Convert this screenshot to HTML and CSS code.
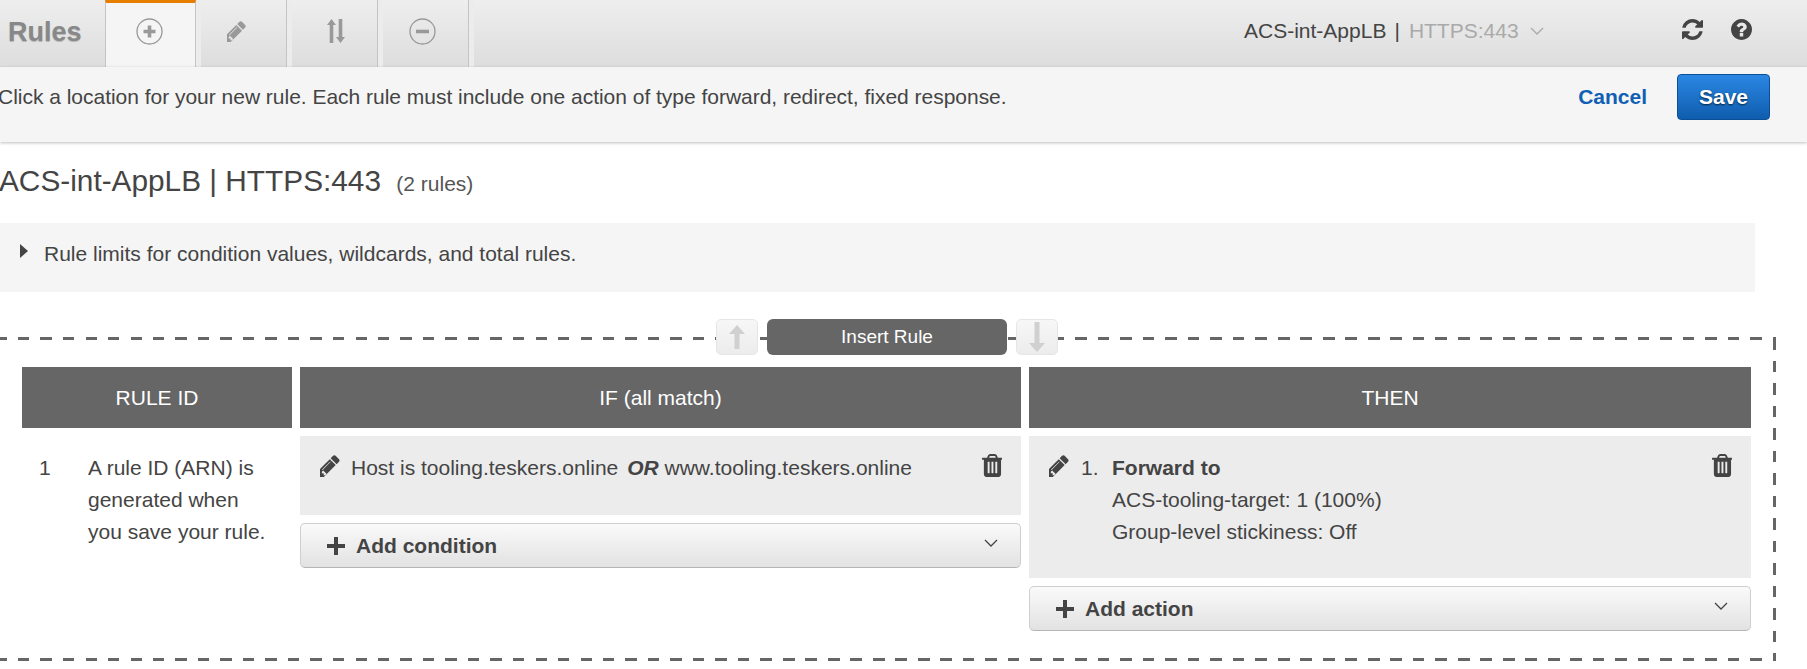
FILE: index.html
```html
<!DOCTYPE html>
<html lang="en">

<head>
    <meta charset="UTF-8">
    <title>Rules</title>
    <link rel="stylesheet" href="styles.css">
</head>

<body>
    <svg class="icon-defs" width="0" height="0">
        <symbol id="i-pencil" viewBox="128 128 1536 1536">
            <path d="M491 1536l91-91-235-235-91 91v107h128v128h107zm372-928q0-22-22-22-10 0-17 7l-542 542q-7 7-7 17 0 22 22 22 10 0 17-7l542-542q7-7 7-17zm-54-192l416 416-832 832h-416v-416zm683 96q0 53-37 90l-166 166-416-416 166-165q36-38 90-38 53 0 91 38l235 234q37 39 37 91z"/>
        </symbol>
        <symbol id="i-trash" viewBox="128 128 1408 1536">
            <path d="M704 1376v-704q0-14-9-23t-23-9h-64q-14 0-23 9t-9 23v704q0 14 9 23t23 9h64q14 0 23-9t9-23zm256 0v-704q0-14-9-23t-23-9h-64q-14 0-23 9t-9 23v704q0 14 9 23t23 9h64q14 0 23-9t9-23zm256 0v-704q0-14-9-23t-23-9h-64q-14 0-23 9t-9 23v704q0 14 9 23t23 9h64q14 0 23-9t9-23zm-544-992h448l-48-117q-7-9-17-11h-317q-10 2-17 11zm928 32v64q0 14-9 23t-23 9h-96v948q0 83-47 143.500t-113 60.500h-832q-66 0-113-58.500t-47-141.500v-952h-96q-14 0-23-9t-9-23v-64q0-14 9-23t23-9h309l70-167q15-37 54-63t79-26h320q40 0 79 26t54 63l70 167h309q14 0 23 9t9 23z"/>
        </symbol>
        <symbol id="i-plus" viewBox="0 0 18 18">
            <path d="M7 0h4v7h7v4h-7v7H7v-7H0V7h7z"/>
        </symbol>
        <symbol id="i-chevron" viewBox="0 0 14 8">
            <path d="M1 1l6 6 6-6" fill="none" stroke="currentColor" stroke-width="1.3"/>
        </symbol>
    </svg>

    <header class="topbar">
        <div class="tabs">
            <span class="tabs-title">Rules</span>
            <a class="tab tab-active">
                <svg class="icon-add" width="27" height="27" viewBox="0 0 27 27">
                    <circle cx="13.500" cy="13.500" r="12.500" fill="none" stroke="#999" stroke-width="1.300"/>
                    <path d="M11.700 7.500h3.600v4.200h4.200v3.600h-4.200v4.200h-3.600v-4.200H7.500v-3.600h4.200z" fill="#999"/>
                </svg>
            </a>
            <a class="tab">
                <svg class="tab-icon icon-edit" width="21" height="21"><use href="#i-pencil"/></svg>
            </a>
            <a class="tab">
                <svg class="tab-icon icon-sort" width="18" height="24" viewBox="0 0 18 24">
                    <path d="M4.500 0L9 6H6.300v18H2.700V6H0zM11.700 0h3.600v18H18l-4.500 6L9 18h2.700z"/>
                </svg>
            </a>
            <a class="tab">
                <svg class="icon-remove" width="27" height="27" viewBox="0 0 27 27">
                    <circle cx="13.500" cy="13.500" r="12.500" fill="none" stroke="#999" stroke-width="1.300"/>
                    <path d="M7 11.700h13v3.600H7z" fill="#999"/>
                </svg>
            </a>
        </div>
        <div class="listener-pick">
            <span>ACS-int-AppLB</span>
            <span class="listener-sep">|</span>
            <span class="listener-port">HTTPS:443</span>
            <svg class="listener-caret" width="14" height="8"><use href="#i-chevron"/></svg>
        </div>
        <div class="top-tools">
            <svg width="21" height="21" viewBox="128 128 1536 1536">
                <path d="M1639 1056q0 5-1 7-64 268-268 434.500t-478 166.500q-146 0-282.500-55t-243.500-157l-129 129q-19 19-45 19t-45-19-19-45v-448q0-26 19-45t45-19h448q26 0 45 19t19 45-19 45l-137 137q71 66 161 102t187 36q134 0 250-65t186-179q11-17 53-117 8-23 30-23h192q13 0 22.500 9.500t9.500 22.500zm25-800v448q0 26-19 45t-45 19h-448q-26 0-45-19t-19-45 19-45l138-138q-148-137-349-137-134 0-250 65t-186 179q-11 17-53 117-8 23-30 23h-199q-13 0-22.500-9.500t-9.500-22.500v-7q65-268 270-434.500t480-166.500q146 0 284 55.500t245 156.500l130-129q19-19 45-19t45 19 19 45z"/>
            </svg>
            <svg width="21" height="21" viewBox="128 128 1536 1536">
                <path d="M1024 1376v-192q0-14-9-23t-23-9h-192q-14 0-23 9t-9 23v192q0 14 9 23t23 9h192q14 0 23-9t9-23zm256-672q0-88-55.500-163t-138.500-116-170-41q-243 0-371 213-15 24 8 42l132 100q7 6 19 6 16 0 25-12 53-68 86-92 34-24 86-24 48 0 85.500 26t37.500 59q0 38-20 61t-68 45q-63 28-115.500 86.500t-52.500 125.500v36q0 14 9 23t23 9h192q14 0 23-9t9-23q0-19 21.500-49.500t54.500-49.500q32-18 49-28.500t46-35 44.500-48 28-60.500 12.500-81zm384 192q0 209-103 385.500t-279.500 279.500-385.500 103-385.500-103-279.500-279.500-103-385.500 103-385.500 279.500-279.500 385.500-103 385.500 103 279.500 279.500 103 385.500z"/>
            </svg>
        </div>
    </header>

    <div class="hint-bar">
        <p class="hint-text">Click a location for your new rule. Each rule must include one action of type forward, redirect, fixed response.</p>
        <a class="cancel-link">Cancel</a>
        <button class="save-btn">Save</button>
    </div>

    <h1 class="page-title">ACS-int-AppLB | HTTPS:443 <small>(2 rules)</small></h1>

    <div class="limits">
        <span class="limits-arrow"></span>
        <span>Rule limits for condition values, wildcards, and total rules.</span>
    </div>

    <section class="rule-box">
        <div class="insert-row">
            <button class="move-btn">
                <svg width="16" height="24" viewBox="0 0 16 24"><path d="M8 0l8 9h-5.500v15h-5V9H0z"/></svg>
            </button>
            <button class="insert-btn">Insert Rule</button>
            <button class="move-btn">
                <svg width="16" height="30" viewBox="0 0 16 30"><path d="M5.500 0h5v21H16l-8 9-8-9h5.500z"/></svg>
            </button>
        </div>

        <div class="rule-grid">
            <div class="col-head">RULE ID</div>
            <div class="col-head">IF (all match)</div>
            <div class="col-head">THEN</div>

            <div class="rule-id">
                <span class="rule-num">1</span>
                <span class="rule-note">A rule ID (ARN) is generated when you save your rule.</span>
            </div>

            <div class="rule-col">
                <div class="rule-card card-if">
                    <svg class="edit-icon" width="22" height="22"><use href="#i-pencil"/></svg>
                    <span class="card-text">Host is tooling.teskers.online <b class="or-word"><i>OR</i></b> www.tooling.teskers.online</span>
                    <svg class="trash-icon" width="21" height="23"><use href="#i-trash"/></svg>
                </div>
                <button class="add-btn">
                    <svg class="add-plus" width="18" height="18"><use href="#i-plus"/></svg>
                    <span>Add condition</span>
                    <svg class="add-caret" width="14" height="8"><use href="#i-chevron"/></svg>
                </button>
            </div>

            <div class="rule-col">
                <div class="rule-card card-then">
                    <svg class="edit-icon" width="22" height="22"><use href="#i-pencil"/></svg>
                    <span class="action-num">1.</span>
                    <div class="card-text">
                        <b>Forward to</b><br>
                        ACS-tooling-target: 1 (100%)<br>
                        Group-level stickiness: Off
                    </div>
                    <svg class="trash-icon" width="21" height="23"><use href="#i-trash"/></svg>
                </div>
                <button class="add-btn">
                    <svg class="add-plus" width="18" height="18"><use href="#i-plus"/></svg>
                    <span>Add action</span>
                    <svg class="add-caret" width="14" height="8"><use href="#i-chevron"/></svg>
                </button>
            </div>
        </div>
    </section>
</body>

</html>
```

FILE: styles.css
```css
html,
body {
    height: 100%;
}

body {
    margin: 0;
    font-family: "Liberation Sans", Arial, sans-serif;
    font-size: 21px;
    color: #444;
    background-color: white;
    overflow: hidden;
}

button {
    font-family: inherit;
    cursor: pointer;
}

.icon-defs {
    display: block;
}

/* top bar */
.topbar {
    display: flex;
    align-items: center;
    height: 67px;
    background: linear-gradient(#eeeeee, #dddddd);
}

.tabs {
    display: flex;
    align-items: stretch;
    height: 67px;
    width: 1244px;
    flex: none;
}

.tabs-title {
    width: 97px;
    padding-left: 8px;
    line-height: 64px;
    font-size: 27px;
    font-weight: bold;
    color: #888;
    text-shadow: 0 1px 1px rgba(0, 0, 0, 0.2);
}

.tab {
    display: flex;
    align-items: center;
    box-sizing: border-box;
    width: 86px;
    margin-left: 5px;
    padding-bottom: 5px;
    border-right: 1px solid #c4c4c4;
    box-shadow: -5px 0 0 #ececec;
}

.tab:last-child {
    box-shadow: -5px 0 0 #ececec, 5px 0 0 #ececec;
}

.tab-active {
    width: 91px;
    margin-left: 0;
    border-left: 1px solid #c4c4c4;
    border-top: 3px solid #e67e00;
    padding-bottom: 8px;
    background-color: #f5f5f5;
    box-shadow: none;
}

.icon-add {
    margin-left: 30px;
}

.icon-edit {
    margin-left: 26px;
}

.icon-sort {
    margin-left: 35px;
}

.icon-remove {
    margin-left: 26px;
}

.tab-icon {
    fill: #999;
}

.listener-pick {
    display: flex;
    align-items: center;
    width: 438px;
    flex: none;
    padding-bottom: 5px;
}

.listener-sep {
    margin: 0 9px 0 8px;
}

.listener-port {
    color: #aaa;
}

.listener-caret {
    margin-left: 11px;
    color: #aaa;
}

.top-tools {
    display: flex;
    gap: 28px;
    padding-bottom: 9px;
    fill: #444;
}

/* hint bar */
.hint-bar {
    display: flex;
    align-items: center;
    height: 75px;
    padding-bottom: 15px;
    box-sizing: border-box;
    background-color: #f5f5f5;
    box-shadow: 0 1px 3px rgba(0, 0, 0, 0.25);
    position: relative;
}

.hint-text {
    margin: 0 0 0 -2px;
    flex: 1;
    letter-spacing: -0.02px;
}

.cancel-link {
    margin-right: 30px;
    font-weight: bold;
    color: #105fb5;
}

.save-btn {
    width: 93px;
    height: 46px;
    margin-right: 37px;
    border: 1px solid #0d4f97;
    border-radius: 4px;
    background: linear-gradient(#2b87e3, #0f5dae);
    color: white;
    font-size: 21px;
    font-weight: bold;
    text-shadow: 0 1px 2px rgba(0, 0, 0, 0.7);
}

/* heading */
.page-title {
    height: 38px;
    margin: 20px 0 23px -1px;
    font-size: 29.800px;
    line-height: 38px;
    font-weight: normal;
}

.page-title small {
    margin-left: 7px;
    font-size: 21px;
    color: #555;
}

.limits {
    display: flex;
    align-items: center;
    gap: 16px;
    box-sizing: border-box;
    width: 1755px;
    height: 69px;
    padding: 0 0 7px 20px;
    background-color: #f5f5f5;
}

.limits-arrow {
    width: 0;
    height: 0;
    margin-top: -6px;
    border-left: 8px solid #444;
    border-top: 7px solid transparent;
    border-bottom: 7px solid transparent;
}

/* dashed rule box, the left edge runs off the page */
.rule-box {
    display: flow-root;
    width: 1786px;
    height: 324px;
    margin: 45px 0 0 -10px;
    padding: 0 3px 0 32px;
    box-sizing: border-box;
    background-image:
        repeating-linear-gradient(90deg, transparent 0 5.500px, #666 5.500px 17px, transparent 17px 22.500px),
        repeating-linear-gradient(90deg, transparent 0 5.500px, #666 5.500px 17px, transparent 17px 22.500px),
        repeating-linear-gradient(0deg, #666 0 8px, transparent 8px 19px, #666 19px 22.500px);
    background-size: 100% 3px, 100% 3px, 3px 100%;
    background-position: 0 0, 0 100%, 100% 0;
    background-repeat: no-repeat;
}

.insert-row {
    display: flex;
    gap: 9px;
    margin: -18px 0 12px 694px;
}

.move-btn {
    display: flex;
    align-items: center;
    justify-content: center;
    width: 42px;
    height: 36px;
    padding: 0;
    border: 1px solid #e6e6e6;
    border-radius: 5px;
    background: linear-gradient(#f7f7f7, #ececec);
    fill: #d0d0d0;
}

.insert-btn {
    width: 240px;
    height: 36px;
    border: none;
    border-radius: 6px;
    background-color: #666;
    color: white;
    font-size: 19px;
}

.rule-grid {
    display: grid;
    grid-template-columns: 270px 721px 722px;
    column-gap: 8px;
    row-gap: 8px;
}

.col-head {
    height: 61px;
    line-height: 61px;
    text-align: center;
    background-color: #666;
    color: white;
}

.rule-id {
    display: flex;
    padding: 16px 0 0 17px;
    line-height: 32px;
}

.rule-num {
    width: 49px;
    flex: none;
}

.rule-note {
    width: 190px;
}

.rule-col {
    display: flex;
    flex-direction: column;
    gap: 8px;
}

.rule-card {
    display: flex;
    align-items: flex-start;
    box-sizing: border-box;
    padding: 16px 19px 0 19px;
    background-color: #ececec;
    line-height: 32px;
}

.card-if {
    height: 79px;
}

.card-then {
    height: 142px;
}

.edit-icon {
    flex: none;
    margin: 3px 10px 0 1px;
    fill: #444;
}

.card-if .card-text {
    margin-left: -1px;
}

.or-word {
    margin-left: 3px;
}

.card-text {
    flex: 1;
}

.action-num {
    width: 31px;
}

.trash-icon {
    flex: none;
    margin-top: 2px;
    fill: #444;
}

.add-btn {
    display: flex;
    align-items: center;
    height: 45px;
    padding: 0 22px 0 26px;
    border: 1px solid #cfcfcf;
    border-bottom-color: #b5b5b5;
    border-radius: 5px;
    background: linear-gradient(#fafafa, #e2e2e2);
    color: #444;
    font-size: 21px;
    font-weight: bold;
}

.add-plus {
    margin-right: 11px;
    fill: #444;
}

.add-caret {
    margin-left: auto;
    margin-bottom: 5px;
}
```
